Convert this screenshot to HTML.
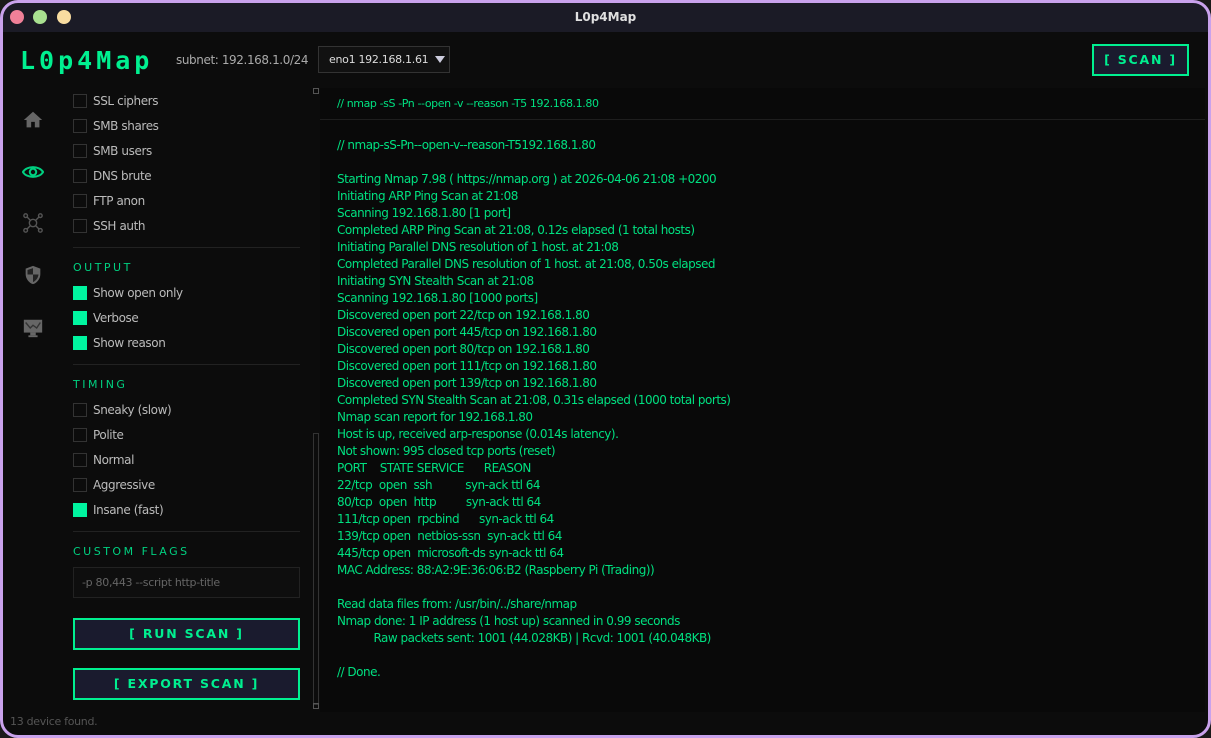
<!DOCTYPE html>
<html><head><style>
*{margin:0;padding:0;box-sizing:border-box}
body{width:1211px;height:738px;background:#1a1a1a;font-family:"DejaVu Sans","Liberation Sans",sans-serif;overflow:hidden;position:relative}
.win{position:absolute;left:0;top:0;width:1211px;height:738px;border-radius:18px;background:#0c0c0c;overflow:hidden}
.frame{position:absolute;left:0;top:0;width:1211px;height:738px;border:3px solid #c9a2ec;border-radius:18px;z-index:10}
.title{position:absolute;left:0;top:0;right:0;height:32px;background:#1b1b26;color:#e0e0e0;font-size:12px;font-weight:bold;text-align:center;line-height:34px}
.dot{position:absolute;top:10px;width:14px;height:14px;border-radius:50%}
.logo{position:absolute;left:20px;top:46px;color:#00f090;font-family:"DejaVu Sans Mono",monospace;font-weight:bold;font-size:25px;letter-spacing:4px}
.subnet{position:absolute;left:176px;top:53px;color:#aaa;font-size:12px;letter-spacing:-0.4px}
.sel{position:absolute;left:318px;top:46px;width:132px;height:27px;border:1px solid #333;background:#111;color:#ddd;font-size:11px;line-height:25px;padding-left:10px;letter-spacing:-0.3px}
.sel:after{content:"";position:absolute;right:4px;top:9px;border:5px solid transparent;border-top:7px solid #ccd;}
.btn{position:absolute;border:2px solid #00f090;background:#1a1b2e;color:#00f090;font-weight:bold;font-size:12.5px;letter-spacing:1.8px;text-align:center}
.opt{position:absolute;left:73px;color:#bbb;font-size:12px;height:16px;line-height:14px;letter-spacing:-0.4px}
.opt i{display:inline-block;width:14px;height:14px;border:1px solid #333;vertical-align:-3px;margin-right:6px}
.opt i.on{background:#00f5a0;border-color:#00f5a0}
.sec{position:absolute;left:73px;color:#00d080;font-size:11px;letter-spacing:2.5px}
.hr{position:absolute;left:73px;width:227px;height:1px;background:#222}
.term{position:absolute;left:320px;top:88px;width:885px;height:624px;background:#090909}
.thead{height:32px;border-bottom:1px solid #1e1e1e;color:#00e080;font-size:11px;padding:9px 17px;letter-spacing:-0.4px}
.out{position:absolute;left:17px;top:49px;color:#00e080;font-size:12px;line-height:17px;white-space:pre;letter-spacing:-0.5px}
.ic{position:absolute;left:22px}
</style></head><body>
<div class="win">
<div class="title">L0p4Map</div>
<div class="dot" style="left:10px;background:#f08098"></div>
<div class="dot" style="left:33px;background:#a8e090"></div>
<div class="dot" style="left:57px;background:#f8dca0"></div>
<div class="logo">L0p4Map</div>
<div class="subnet">subnet: 192.168.1.0/24</div>
<div class="sel">eno1 192.168.1.61</div>
<div class="btn" style="left:1092px;top:44px;width:97px;height:32px;line-height:28px">[ SCAN ]</div>

<svg class="ic" style="top:109px" width="22" height="22" viewBox="0 0 24 24"><path d="M12 3L2 12h3v8h5v-6h4v6h5v-8h3z" fill="#666"/></svg>
<svg class="ic" style="top:161px" width="22" height="22" viewBox="0 0 24 24"><path d="M1 12C5 5 19 5 23 12C19 19 5 19 1 12Z" fill="none" stroke="#00d080" stroke-width="2.2"/><circle cx="12" cy="12" r="3.5" fill="none" stroke="#00d080" stroke-width="2.2"/></svg>
<svg class="ic" style="top:212px" width="22" height="22" viewBox="0 0 24 24" fill="none" stroke="#555" stroke-width="1.5"><circle cx="4" cy="4" r="2"/><circle cx="20" cy="4" r="2"/><circle cx="4" cy="20" r="2"/><circle cx="20" cy="20" r="2"/><circle cx="12" cy="12" r="4"/><path d="M5.5 5.5L9 9M18.5 5.5L15 9M5.5 18.5L9 15M18.5 18.5L15 15"/></svg>
<svg class="ic" style="top:264px" width="22" height="22" viewBox="0 0 24 24"><path d="M12 2L4 5v6c0 5 3.5 9.5 8 11c4.5-1.5 8-6 8-11V5z" fill="#666"/><path d="M12 4.5v7H6V6.5zM12 11.5h6c-.5 4-3 7-6 8.3z" fill="#222"/></svg>
<svg class="ic" style="top:317px" width="22" height="22" viewBox="0 0 24 24"><rect x="2" y="3" width="20" height="14" fill="#666"/><path d="M4 6l5 6 3-3 4 3 4-6" stroke="#333" fill="none" stroke-width="1.5"/><rect x="9" y="17" width="6" height="3" fill="#666"/><rect x="7" y="20" width="10" height="2" fill="#666"/></svg>

<div class="opt" style="top:94px"><i></i>SSL ciphers</div>
<div class="opt" style="top:119px"><i></i>SMB shares</div>
<div class="opt" style="top:144px"><i></i>SMB users</div>
<div class="opt" style="top:169px"><i></i>DNS brute</div>
<div class="opt" style="top:194px"><i></i>FTP anon</div>
<div class="opt" style="top:219px"><i></i>SSH auth</div>
<div class="hr" style="top:247px"></div>
<div class="sec" style="top:261px">OUTPUT</div>
<div class="opt" style="top:286px"><i class="on"></i>Show open only</div>
<div class="opt" style="top:311px"><i class="on"></i>Verbose</div>
<div class="opt" style="top:336px"><i class="on"></i>Show reason</div>
<div class="hr" style="top:364px"></div>
<div class="sec" style="top:378px">TIMING</div>
<div class="opt" style="top:403px"><i></i>Sneaky (slow)</div>
<div class="opt" style="top:428px"><i></i>Polite</div>
<div class="opt" style="top:453px"><i></i>Normal</div>
<div class="opt" style="top:478px"><i></i>Aggressive</div>
<div class="opt" style="top:503px"><i class="on"></i>Insane (fast)</div>
<div class="hr" style="top:531px"></div>
<div class="sec" style="top:545px">CUSTOM FLAGS</div>
<div style="position:absolute;left:73px;top:567px;width:227px;height:31px;border:1px solid #222;background:#0e0e0e;color:#666;font-size:11px;line-height:29px;padding-left:8px;letter-spacing:-0.3px">-p 80,443 --script http-title</div>
<div class="btn" style="left:73px;top:618px;width:227px;height:32px;line-height:28px">[ RUN SCAN ]</div>
<div class="btn" style="left:73px;top:668px;width:227px;height:32px;line-height:28px">[ EXPORT SCAN ]</div>
<div style="position:absolute;left:313px;top:433px;width:6px;height:272px;border:1px solid #333;background:#0c0c0c"></div>
<div style="position:absolute;left:313px;top:88px;width:6px;height:6px;border:1px solid #555"></div>
<div style="position:absolute;left:313px;top:703px;width:6px;height:6px;border:1px solid #555"></div>

<div class="term"><div class="thead">// nmap -sS -Pn --open -v --reason -T5 192.168.1.80</div>
<div class="out">// nmap-sS-Pn--open-v--reason-T5192.168.1.80

Starting Nmap 7.98 ( https://nmap.org ) at 2026-04-06 21:08 +0200
Initiating ARP Ping Scan at 21:08
Scanning 192.168.1.80 [1 port]
Completed ARP Ping Scan at 21:08, 0.12s elapsed (1 total hosts)
Initiating Parallel DNS resolution of 1 host. at 21:08
Completed Parallel DNS resolution of 1 host. at 21:08, 0.50s elapsed
Initiating SYN Stealth Scan at 21:08
Scanning 192.168.1.80 [1000 ports]
Discovered open port 22/tcp on 192.168.1.80
Discovered open port 445/tcp on 192.168.1.80
Discovered open port 80/tcp on 192.168.1.80
Discovered open port 111/tcp on 192.168.1.80
Discovered open port 139/tcp on 192.168.1.80
Completed SYN Stealth Scan at 21:08, 0.31s elapsed (1000 total ports)
Nmap scan report for 192.168.1.80
Host is up, received arp-response (0.014s latency).
Not shown: 995 closed tcp ports (reset)
PORT    STATE SERVICE      REASON
22/tcp  open  ssh          syn-ack ttl 64
80/tcp  open  http         syn-ack ttl 64
111/tcp open  rpcbind      syn-ack ttl 64
139/tcp open  netbios-ssn  syn-ack ttl 64
445/tcp open  microsoft-ds syn-ack ttl 64
MAC Address: 88:A2:9E:36:06:B2 (Raspberry Pi (Trading))

Read data files from: /usr/bin/../share/nmap
Nmap done: 1 IP address (1 host up) scanned in 0.99 seconds
           Raw packets sent: 1001 (44.028KB) | Rcvd: 1001 (40.048KB)

// Done.</div></div>
<div style="position:absolute;left:10px;top:715px;color:#555;font-size:11px;letter-spacing:-0.3px">13 device found.</div>
</div>
<div class="frame"></div>
</body></html>
